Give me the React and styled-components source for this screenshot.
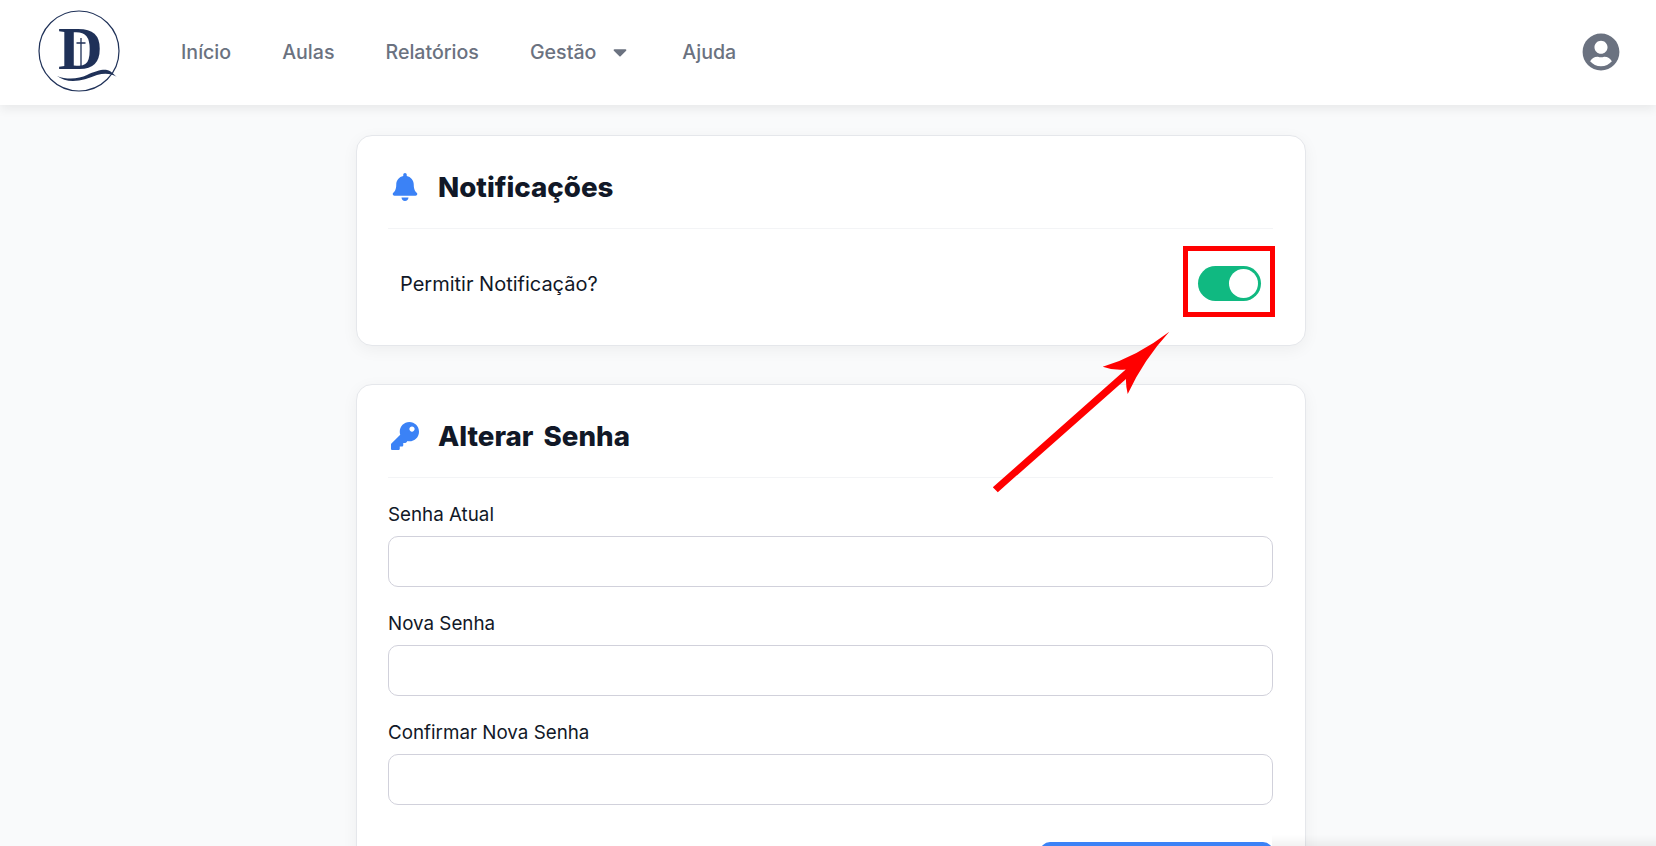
import React from "react";
import styled, { createGlobalStyle } from "styled-components";
import { FaBell, FaKey, FaCaretDown, FaUserCircle } from "react-icons/fa";

const GlobalStyle = createGlobalStyle`
  html, body {
    margin: 0;
    height: 846px;
    overflow: hidden;
    background: #f9fafb;
    font-family: "Inter", "Liberation Sans", sans-serif;
  }
  * {
    box-sizing: border-box;
  }
`;

const links = ["Início", "Aulas", "Relatórios", "Gestão", "Ajuda"];
const fields = ["Senha Atual", "Nova Senha", "Confirmar Nova Senha"];

const Logo = () => (
  <svg width="84" height="84" viewBox="0 0 84 84">
    <circle cx="42" cy="42" r="40" fill="#fff" stroke="#1f3158" strokeWidth="1.2" />
    <text
      x="21"
      y="60"
      fontFamily="'Liberation Serif', serif"
      fontWeight="700"
      fontSize="62"
      fill="#1f3158"
    >
      D
    </text>
    <path d="M44 29v30M39.500 34h9" stroke="#1f3158" strokeWidth="1.300" fill="none" />
    <path
      d="M20 67C30 71 42 70 50 66C58 62 66 60 70 61C75 62 77 66 80 68C74 64.500 68 64 60 66C52 69 44 72 36 72C30 72 24 70 20 67z"
      fill="#1f3158"
    />
  </svg>
);

const App = () => {
  return (
    <>
      <GlobalStyle />
      <Header>
        <LogoBox>
          <Logo />
        </LogoBox>
        <Nav>
          {links.map((link) => (
            <NavLink key={link}>
              {link}
              {link === "Gestão" && <FaCaretDown />}
            </NavLink>
          ))}
        </Nav>
        <Avatar>
          <FaUserCircle />
        </Avatar>
      </Header>

      <Main>
        <Card $height={211}>
          <CardTitle>
            <FaBell />
            <h2>Notificações</h2>
          </CardTitle>
          <ToggleRow>
            <span>Permitir Notificação?</span>
            <Toggle>
              <Knob />
            </Toggle>
          </ToggleRow>
        </Card>

        <Card>
          <CardTitle>
            <FaKey />
            <h2>Alterar Senha</h2>
          </CardTitle>
          <Form>
            {fields.map((field) => (
              <Field key={field}>
                <label>{field}</label>
                <input type="password" />
              </Field>
            ))}
            <SaveRow>
              <SaveButton type="button" />
            </SaveRow>
          </Form>
        </Card>
      </Main>

      {/* anotacao por cima do print */}
      <Highlight />
      <Arrow width="190" height="170" viewBox="0 0 190 170">
        <path
          d="M2.800 159.200L135.700 41.500Q123.300 42.700 112.700 38.700Q146.700 28.700 179.300 3.700Q153.300 32 137.700 66Q135.700 58 136 51L7.800 164.200z"
          fill="#ff0000"
        />
      </Arrow>
      <BottomFade />
    </>
  );
};

export default App;

const Header = styled.header`
  position: relative;
  z-index: 2;
  display: flex;
  align-items: center;
  height: 105px;
  padding: 0 36px 2px 37px;
  background: #fff;
  box-shadow: 0 4px 10px rgba(0, 0, 0, 0.07);
`;

const LogoBox = styled.div`
  display: flex;
  width: 84px;
  height: 84px;
  margin-bottom: 1px;
`;

const Nav = styled.nav`
  display: flex;
  align-items: center;
  gap: 51px;
  margin-left: 60px;
  flex: 1;
`;

const NavLink = styled.a`
  display: flex;
  align-items: center;
  gap: 13px;
  font-size: 19.6px;
  font-weight: 500;
  color: #6b7280;
  svg {
    width: 22px;
    height: 22px;
  }
`;

const Avatar = styled.div`
  display: flex;
  color: #6b7280;
  svg {
    width: 38px;
    height: 38px;
  }
`;

const Main = styled.main`
  display: flex;
  flex-direction: column;
  gap: 38px;
  width: 950px;
  margin: 30px 0 0 356px;
`;

const Card = styled.section`
  height: ${(p) => (p.$height ? `${p.$height}px` : "auto")};
  padding: 0 32px 0 31px;
  background: #fff;
  border: 1px solid #e5e7eb;
  border-radius: 16px;
  box-shadow: 0 4px 16px rgba(0, 0, 0, 0.05);
`;

const CardTitle = styled.div`
  display: flex;
  align-items: center;
  gap: 19px;
  height: 93px;
  padding: 9px 0 0 3px;
  border-bottom: 1px solid #f3f4f6;
  color: #3b82f6;
  svg {
    width: 28px;
    height: 28px;
    flex: none;
  }
  h2 {
    margin: 0;
    font-size: 27.7px;
    font-weight: 800;
    word-spacing: 4px;
    color: #111827;
  }
`;

const ToggleRow = styled.div`
  display: flex;
  align-items: center;
  justify-content: space-between;
  height: 109px;
  padding: 0 12px;
  font-size: 20px;
  color: #111827;
`;

const Toggle = styled.div`
  display: flex;
  align-items: center;
  justify-content: flex-end;
  width: 63px;
  height: 35px;
  padding: 3px;
  border-radius: 18px;
  background: #10b981;
`;

const Knob = styled.div`
  width: 29px;
  height: 29px;
  border-radius: 50%;
  background: #fff;
`;

const Form = styled.form`
  display: flex;
  flex-direction: column;
  padding-top: 25px;
`;

const Field = styled.div`
  display: flex;
  flex-direction: column;
  gap: 9px;
  margin-bottom: 25px;
  label {
    font-size: 18.8px;
    font-weight: 400;
    line-height: 24px;
    color: #111827;
  }
  input {
    height: 51px;
    border: 1px solid #d1d1db;
    border-radius: 10px;
    background: #fff;
  }
`;

const SaveRow = styled.div`
  display: flex;
  justify-content: flex-end;
  margin-top: 12px;
  padding-bottom: 32px;
`;

const SaveButton = styled.button`
  width: 233px;
  height: 50px;
  border: none;
  border-radius: 10px;
  background: #3b82f6;
`;

const Highlight = styled.div`
  position: absolute;
  left: 1183px;
  top: 246px;
  width: 92px;
  height: 71px;
  border: 5px solid #ff0000;
  z-index: 3;
`;

const Arrow = styled.svg`
  position: absolute;
  left: 990px;
  top: 328px;
  z-index: 3;
`;

const BottomFade = styled.div`
  position: fixed;
  left: 1272px;
  right: 0;
  bottom: 0;
  height: 11px;
  background: linear-gradient(rgba(0, 0, 0, 0), rgba(0, 0, 0, 0.05));
  z-index: 3;
`;
